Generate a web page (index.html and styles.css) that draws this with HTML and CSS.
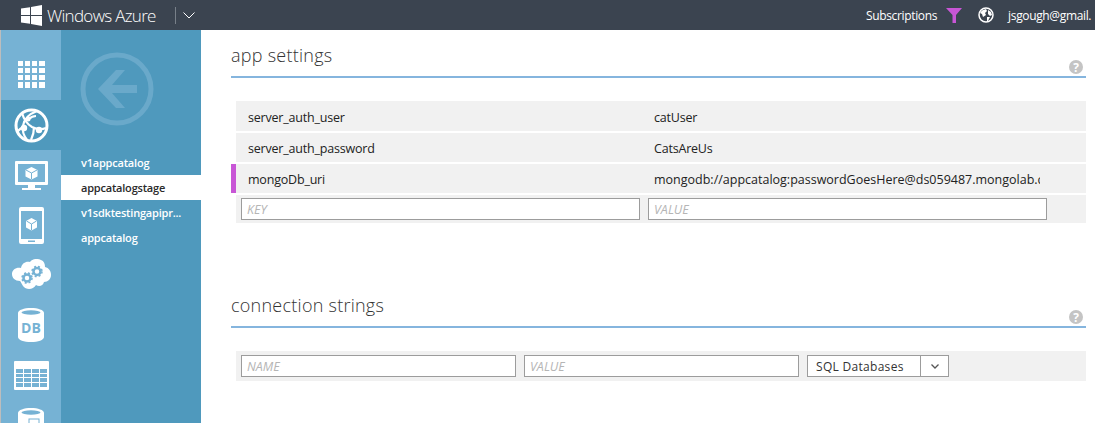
FILE: index.html
```html
<!DOCTYPE html>
<html lang="en">
<head>
<meta charset="utf-8">
<title>Windows Azure</title>
<link rel="stylesheet" href="styles.css">
</head>
<body>
<header class="topbar">
  <div class="brand">
    <svg class="logo" width="21" height="21" viewBox="0 0 21 21"><path fill="#fff" d="M0 3.600 9 2.200V10H0zM10 2 21 0V10H10zM0 11H9V18.800L0 17.400zM10 11H21V21L10 19z"/></svg>
    <span class="brand-name">Windows Azure</span>
    <span class="brand-sep"></span>
    <svg class="brand-chev" width="12" height="7" viewBox="0 0 12 7"><path d="M.5.5 6 6 11.500.5" fill="none" stroke="#fff" stroke-width="1"/></svg>
  </div>
  <div class="top-right">
    <span class="top-text">Subscriptions</span>
    <svg class="funnel" width="16" height="15" viewBox="0 0 16 15"><path fill="#c856d6" d="M0 0H16L10 7V15H6.500V7z"/></svg>
    <svg class="globe" width="16" height="16" viewBox="0 0 16 16"><circle cx="8" cy="8" r="7" fill="none" stroke="#fff" stroke-width="1.500"/><path fill="#fff" d="M4 3.500 8 2l1 2-2 2 1 2-3 2-1-3-2-1zM10 3l3 2 1 3-2 1-2-2zM9 10l3 0-2 4-1 0z"/></svg>
    <span class="top-text user">jsgough@gmail.</span>
  </div>
</header>
<div class="shell">
  <nav class="rail">
    <a class="tile tile-first">
      <svg width="27" height="27" viewBox="0 0 27 27"><path fill="#fff" d="M0 0h5v5H0zM7 0h5v5H7zM14 0h5v5h-5zM21 0h6v5h-6zM0 7h5v5H0zM7 7h5v5H7zM14 7h5v5h-5zM21 7h6v5h-6zM0 14h5v5H0zM7 14h5v5H7zM14 14h5v5h-5zM21 14h6v5h-6zM0 21h5v6H0zM7 21h5v6H7zM14 21h5v6h-5zM21 21h6v6h-6z"/></svg>
    </a>
    <a class="tile tile-active">
      <svg width="35" height="35" viewBox="0 0 35 35"><circle cx="17.500" cy="17.500" r="15.500" fill="none" stroke="#fff" stroke-width="3"/><path d="M23 3C15 6 10 11 9 18c-1 5 1 10 4 14M8 5c2 7 5 11 10 14 4 2 9 3 14 1M20 19c0 5-1 9-3 13M3 24c2-2 4-4 6-5M22 8c-2 0-5 1-7 3" fill="none" stroke="#fff" stroke-width="2.200"/><circle cx="14" cy="11" r="2.500" fill="#fff"/><circle cx="10" cy="20" r="3.200" fill="#fff"/><circle cx="25" cy="22" r="3.200" fill="#fff"/></svg>
    </a>
    <a class="tile">
      <svg width="33" height="29" viewBox="0 0 33 29"><path fill="#fff" fill-rule="evenodd" d="M1 0H32a1 1 0 0 1 1 1V23a1 1 0 0 1-1 1H20V27H26V29H7V27H13V24H1a1 1 0 0 1-1-1V1a1 1 0 0 1 1-1zM3 3V21H30V3z"/><path fill="#fff" d="M16.500 6l6 3v6.500l-6 3-6-3V9z"/><path d="M11 9l5.500 3L22 9M16.500 12v6" fill="none" stroke="#76b2d4"/></svg>
    </a>
    <a class="tile">
      <svg width="25" height="37" viewBox="0 0 25 37"><path fill="#fff" fill-rule="evenodd" d="M2 0H23a2 2 0 0 1 2 2V35a2 2 0 0 1-2 2H2a2 2 0 0 1-2-2V2a2 2 0 0 1 2-2zM2 4V32H23V4zM9 33.500v1.500h7v-1.500z"/><path fill="#fff" d="M12.500 11l5.500 3v6.500l-5.500 3-5.500-3V14z"/><path d="M7.500 14l5 3 5-3M12.500 17v6" fill="none" stroke="#76b2d4"/></svg>
    </a>
    <a class="tile">
      <svg width="39" height="32" viewBox="0 0 39 32"><path fill="#fff" d="M9 9c1-5 5-7 9-6 2-3 7-4 11-2 3 1 4 4 4 7 4 1 6 4 6 8s-3 7-7 7c-1 4-5 5-8 3-3 5-10 5-13 1-2-3-2-4-3-5-5 0-8-3-8-7s4-7 9-6z"/><circle cx="15" cy="19" r="3.500" fill="none" stroke="#76b2d4" stroke-width="2.500"/><circle cx="25" cy="12.500" r="3.500" fill="none" stroke="#76b2d4" stroke-width="2.500"/><circle cx="15" cy="19" r="5" fill="none" stroke="#76b2d4" stroke-width="1.500" stroke-dasharray="2 2"/><circle cx="25" cy="12.500" r="5" fill="none" stroke="#76b2d4" stroke-width="1.500" stroke-dasharray="2 2"/></svg>
    </a>
    <a class="tile tile-db">
      <svg width="26" height="34" viewBox="0 0 26 34"><path fill="#fff" d="M0 5C0 2 6 0 13 0s13 2 13 5V29c0 3-6 5-13 5S0 32 0 29z"/><ellipse cx="13" cy="4.500" rx="9.500" ry="2.200" fill="#76b2d4"/><text x="13" y="25" class="db-text">DB</text></svg>
    </a>
    <a class="tile">
      <svg width="35" height="29" viewBox="0 0 35 29"><path fill="#fff" d="M1 0H34a1 1 0 0 1 1 1V28a1 1 0 0 1-1 1H1a1 1 0 0 1-1-1V1a1 1 0 0 1 1-1z"/><path fill="#76b2d4" d="M2 8h7v4H2zM10 8h7v4h-7zM18 8h7v4h-7zM26 8h7v4h-7zM2 13h7v3H2zM10 13h7v3h-7zM18 13h7v3h-7zM26 13h7v3h-7zM2 17h7v4H2zM10 17h7v4h-7zM18 17h7v4h-7zM26 17h7v4h-7zM2 22h7v4H2zM10 22h7v4h-7zM18 22h7v4h-7zM26 22h7v4h-7z"/></svg>
    </a>
    <a class="tile">
      <svg width="26" height="34" viewBox="0 0 26 34"><path fill="#fff" d="M0 5C0 2 6 0 13 0s13 2 13 5V29c0 3-6 5-13 5S0 32 0 29z"/><ellipse cx="13" cy="4.500" rx="9.500" ry="2.200" fill="#76b2d4"/><rect x="11" y="11" width="10" height="10" fill="none" stroke="#76b2d4"/></svg>
    </a>
  </nav>
  <aside class="subnav">
    <div class="back">
      <svg width="74" height="74" viewBox="0 0 74 74"><circle cx="37" cy="37" r="34" fill="none" stroke="#6aa9ca" stroke-width="5"/><path fill="#6aa9ca" d="M36 18 18 37l18 19h9L32 41H57V33H32L45 18z"/></svg>
    </div>
    <ul class="sites">
      <li class="site">v1appcatalog</li>
      <li class="site site-current">appcatalogstage</li>
      <li class="site">v1sdktestingapipr...</li>
      <li class="site">appcatalog</li>
    </ul>
  </aside>
  <main class="content">
    <section class="panel panel-app">
      <div class="panel-head">
        <h2 class="panel-title">app settings</h2>
        <svg class="help" width="14" height="14" viewBox="0 0 14 14"><circle cx="7" cy="7" r="7" fill="#c4c4c4"/><text x="7" y="11.500" class="help-text">?</text></svg>
      </div>
      <div class="table">
        <div class="row"><span class="cell-key">server_auth_user</span><span class="cell-val">catUser</span></div>
        <div class="row row-2"><span class="cell-key">server_auth_password</span><span class="cell-val">CatsAreUs</span></div>
        <div class="row row-3 row-flagged"><span class="cell-key">mongoDb_uri</span><span class="cell-val cell-clip">mongodb://appcatalog:passwordGoesHere@ds059487.mongolab.com</span></div>
        <div class="row row-form row-add">
          <input class="field field-wide" placeholder="KEY">
          <input class="field field-wide" placeholder="VALUE">
        </div>
      </div>
    </section>
    <section class="panel panel-conn">
      <div class="panel-head">
        <h2 class="panel-title">connection strings</h2>
        <svg class="help" width="14" height="14" viewBox="0 0 14 14"><circle cx="7" cy="7" r="7" fill="#c4c4c4"/><text x="7" y="11.500" class="help-text">?</text></svg>
      </div>
      <div class="table">
        <div class="row row-form row-conn">
          <input class="field field-mid" placeholder="NAME">
          <input class="field field-mid" placeholder="VALUE">
          <div class="select">
            <span class="select-label">SQL Databases</span>
            <span class="select-btn"><svg width="8" height="5" viewBox="0 0 8 5"><path d="M.5.5 4 4 7.500.5" fill="none" stroke="#555" stroke-width="1.300"/></svg></span>
          </div>
        </div>
      </div>
    </section>
  </main>
</div>
</body>
</html>
```

FILE: styles.css
```css
* { box-sizing: border-box; }
html, body { margin: 0; height: 423px; overflow: hidden; }
body { font-family: "Open Sans", "Noto Sans", sans-serif; background: #fff; color: #222; }

.topbar { height: 30px; background: #3b4450; display: flex; justify-content: space-between; align-items: center; color: #fff; }
.brand { display: flex; align-items: center; padding-left: 21px; }
.brand-name { margin-left: 5px; font-size: 17px; letter-spacing: -.7px; font-weight: 300; width: 128px; }
.brand-sep { width: 1px; height: 17px; background: #788089; }
.brand-chev { margin-left: 7px; }
.top-right { display: flex; align-items: center; width: 229px; flex: none; overflow: hidden; white-space: nowrap; }
.top-text { font-size: 12px; letter-spacing: -.35px; }
.funnel { margin-left: 9px; }
.globe { margin-left: 16px; }
.user { margin-left: 14px; }

.shell { display: flex; height: 393px; border-left: 1px solid #bdbdbd; }
.rail { width: 60px; background: #76b2d4; display: flex; flex-direction: column; flex: none; overflow: hidden; }
.tile { height: 50px; flex: none; display: flex; align-items: center; justify-content: center; }
.tile-first { height: 70px; padding-top: 19px; }
.tile-active { background: #4f99bd; }
.tile-db { padding-bottom: 1px; }
.db-text { font: 700 14px "Open Sans", sans-serif; fill: #76b2d4; text-anchor: middle; }

.subnav { width: 140px; flex: none; background: #4f99bd; color: #fff; }
.back { height: 120px; padding: 22px 0 0 19px; }
.sites { list-style: none; margin: 0; padding: 0; }
.site { height: 25px; padding-left: 20px; font-size: 11px; font-weight: 600; line-height: 25px; letter-spacing: -.2px; white-space: nowrap; }
.site-current { background: #fff; color: #2a2a2a; }

.content { flex: 1; padding-left: 30px; padding-right: 9px; min-width: 0; }
.panel-app { padding-top: 11px; }
.panel-conn { padding-top: 68px; }
.panel-head { height: 37px; display: flex; justify-content: space-between; border-bottom: 2px solid #85b5de; }
.panel-title { margin: 0; font-size: 18px; font-weight: 300; line-height: 28px; letter-spacing: .25px; color: #333; }
.help { margin: 19px 3px 0 0; }
.help-text { font: 700 12px "Open Sans", sans-serif; fill: #fff; text-anchor: middle; }

.table { margin: 23px 0 0 5px; display: flex; flex-direction: column; }
.row { height: 30px; background: #f1f1f1; display: flex; align-items: center; font-size: 12.500px; letter-spacing: -.2px; padding-top: 2px; position: relative; color: #222; }
.row-2 { margin-top: 2px; height: 29px; }
.row-3 { margin-top: 2px; height: 29px; }
.row-flagged::before { content: ""; position: absolute; left: -5px; top: 0; bottom: 0; width: 5px; background: #c856d6; }
.cell-key { width: 407px; padding-left: 12px; flex: none; }
.cell-val { width: 397px; flex: none; padding-left: 11px; white-space: nowrap; overflow: hidden; }
.cell-clip { letter-spacing: 0; }
.row-form { gap: 8px; padding: 0 0 0 5px; }
.row-add { margin-top: 2px; height: 28px; }
.field { height: 22px; border: 1px solid #9c9c9c; background: #fff; padding: 1px 5px 0; font: italic 12.500px "Open Sans", sans-serif; outline: none; border-radius: 0; }
.field::placeholder { color: #b5b5b5; opacity: 1; }
.field-wide { width: 399px; }
.field-mid { width: 275px; }
.select { width: 142px; height: 22px; border: 1px solid #9c9c9c; background: #fff; display: flex; align-items: center; color: #333; }
.select-label { flex: 1; padding-left: 8px; letter-spacing: .3px; font-size: 12px; }
.select-btn { width: 28px; height: 100%; border-left: 1px solid #9c9c9c; display: flex; align-items: center; justify-content: center; }
```
